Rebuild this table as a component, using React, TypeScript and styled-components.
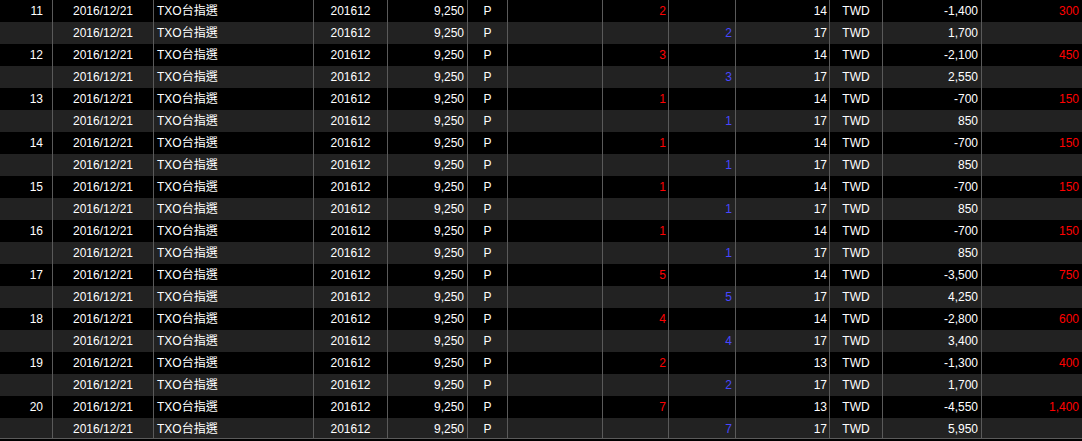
import React from 'react';
import styled, { createGlobalStyle } from 'styled-components';

const GlobalStyle = createGlobalStyle`
  html, body {
    margin: 0;
    padding: 0;
    background: #000;
  }
  body {
    font-family: "Liberation Sans", Arial, "Noto Sans CJK TC", sans-serif;
    font-size: 12px;
    color: #fff;
  }
`;

// column widths (each includes its 1px right grid line)
const columns = '53px 101px 160px 74px 80px 40px 95px 66px 67px 94px 53px 99px 100px';

type Align = 'left' | 'center' | 'right';

interface Fill {
  no: number;
  qty: number;
  fee: number;
  debit: string;
  credit: string;
  profit: string;
}

const fills: Fill[] = [
  { no: 11, qty: 2, fee: 14, debit: '-1,400', credit: '1,700', profit: '300' },
  { no: 12, qty: 3, fee: 14, debit: '-2,100', credit: '2,550', profit: '450' },
  { no: 13, qty: 1, fee: 14, debit: '-700', credit: '850', profit: '150' },
  { no: 14, qty: 1, fee: 14, debit: '-700', credit: '850', profit: '150' },
  { no: 15, qty: 1, fee: 14, debit: '-700', credit: '850', profit: '150' },
  { no: 16, qty: 1, fee: 14, debit: '-700', credit: '850', profit: '150' },
  { no: 17, qty: 5, fee: 14, debit: '-3,500', credit: '4,250', profit: '750' },
  { no: 18, qty: 4, fee: 14, debit: '-2,800', credit: '3,400', profit: '600' },
  { no: 19, qty: 2, fee: 13, debit: '-1,300', credit: '1,700', profit: '400' },
  { no: 20, qty: 7, fee: 13, debit: '-4,550', credit: '5,950', profit: '1,400' },
];

const Grid = styled.div`
  height: 438px;
  overflow: hidden;
  border-bottom: 1px solid #5a5a5a;
`;

const Row = styled.div<{ $alt?: boolean }>`
  display: grid;
  grid-template-columns: ${columns};
  height: 22px;
  background: ${p => (p.$alt ? '#222' : '#000')};
`;

const Cell = styled.div<{ $align?: Align; $color?: string; $pr?: number }>`
  box-sizing: border-box;
  border-right: 1px solid #5a5a5a;
  line-height: 22px;
  white-space: nowrap;
  overflow: hidden;
  text-align: ${p => p.$align || 'left'};
  color: ${p => p.$color || '#fff'};
  padding: 0 ${p => (p.$pr ?? 3)}px 0 3px;

  &:last-child {
    border-right: none;
  }
`;

const RED = '#ff0000';
const BLUE = '#4848ff';

const TradeRow: React.FC<{ no?: number; alt?: boolean; sell?: number; buy?: number; fee: number; amount: string; profit?: string }> = ({
  no, alt, sell, buy, fee, amount, profit,
}) => (
  <Row $alt={alt}>
    <Cell $align="right" $pr={9}>{no ?? ''}</Cell>
    <Cell $align="center">2016/12/21</Cell>
    <Cell>TXO台指選</Cell>
    <Cell $align="center">201612</Cell>
    <Cell $align="right">9,250</Cell>
    <Cell $align="center">P</Cell>
    <Cell />
    <Cell $align="right" $color={RED} $pr={2}>{sell ?? ''}</Cell>
    <Cell $align="right" $color={BLUE}>{buy ?? ''}</Cell>
    <Cell $align="right" $pr={2}>{fee}</Cell>
    <Cell $align="center">TWD</Cell>
    <Cell $align="right">{amount}</Cell>
    <Cell $align="right" $color={RED}>{profit ?? ''}</Cell>
  </Row>
);

export default function App() {
  return (
    <>
      <GlobalStyle />
      <Grid>
        {fills.map(f => (
          <React.Fragment key={f.no}>
            <TradeRow no={f.no} sell={f.qty} fee={f.fee} amount={f.debit} profit={f.profit} />
            <TradeRow alt buy={f.qty} fee={17} amount={f.credit} />
          </React.Fragment>
        ))}
      </Grid>
    </>
  );
}
